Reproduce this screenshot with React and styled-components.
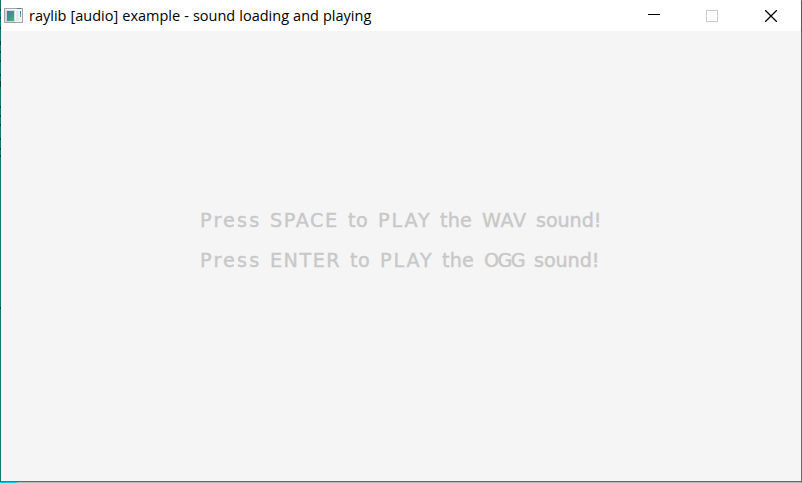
import React from "react";
import styled, { createGlobalStyle } from "styled-components";

const GlobalStyle = createGlobalStyle`
  html, body, #root { margin: 0; height: 100%; overflow: hidden; }
  *, *::before, *::after { box-sizing: border-box; }
`;

const Desktop = styled.div`
  width: 802px;
  height: 483px;
  display: grid;
  grid-template-columns: 1px 1fr 1px;
  grid-template-rows: 482px 1px;
  background: #b4b4b4;
`;

const specks = [9, 17, 27, 41, 43, 51, 60, 74, 81, 83, 85, 106, 115, 124, 138, 148, 155, 307];

const LeftEdge = styled.div`
  background: linear-gradient(
    ${specks.map((y) => `#157574 ${y}px, #173d38 ${y}px, #173d38 ${y + 2}px, #157574 ${y + 2}px`).join(", ")}
  );
`;

const RightEdge = styled.div`
  background: linear-gradient(#8b6f67 2px, #23706d 2px 31px, #686c6c 31px);
`;

const BottomEdge = styled.div`
  grid-column: 1 / -1;
  width: 17px;
  background: #00cfd3;
`;

const Window = styled.main`
  display: grid;
  grid-template-rows: 31px 1fr;
  border-bottom: 1px solid #696969;
  background: #f5f5f5;
`;

const TitleBar = styled.header`
  display: flex;
  align-items: center;
  padding-left: 3px;
  background: #fff;
`;

const Title = styled.h1`
  flex: 1;
  margin: 0 0 0 5px;
  font: 400 14.5px/20px "Open Sans", "Noto Sans", sans-serif;
  letter-spacing: 0;
  word-spacing: 0.3px;
  color: #000;
  white-space: pre;
`;

const Controls = styled.div`
  display: flex;
  height: 31px;
`;

const ControlButton = styled.button`
  width: ${({ $width = 58 }) => $width}px;
  height: 31px;
  padding: 0;
  border: 0;
  background: none;
  color: ${({ $muted }) => ($muted ? "#cccccc" : "#000")};
  display: grid;
  place-items: center;
`;

const Canvas = styled.section`
  padding: 180px 0 0 199px;
  font: 400 19.2px/20px "DejaVu Sans", sans-serif;
  color: #c8c8c8;
  -webkit-text-stroke: 0.4px #c8c8c8;
`;

const Message = styled.p`
  display: flex;
  gap: 10px;
  height: 20px;
  margin: 0 0 20px;
`;

const Word = styled.span`
  flex: none;
  width: ${({ $width }) => $width}px;
  letter-spacing: ${({ $spacing }) => $spacing}px;
  white-space: nowrap;
`;

const messages = [
  [["Press", 60, 2.2], ["SPACE", 68, 1.6], ["to", 20, 0.6], ["PLAY", 52, 1.9], ["the", 32, 0.2], ["WAV", 44, 0.6], ["sound!", 62, -0.1]],
  [["Press", 60, 2.2], ["ENTER", 70, 1.5], ["to", 20, 0.6], ["PLAY", 52, 1.9], ["the", 32, 0.2], ["OGG", 40, -1.6], ["sound!", 62, -0.1]],
];

function AppIcon() {
  return (
    <svg width="20" height="16" viewBox="0 0 20 16" shapeRendering="crispEdges" aria-hidden="true">
      <defs>
        <linearGradient id="screen" x1="0" y1="0" x2="1" y2="1">
          <stop stopColor="#4678a5" />
          <stop offset=".55" stopColor="#43968a" />
          <stop offset="1" stopColor="#59b573" />
        </linearGradient>
      </defs>
      <path fill="#a0a5aa" d="M0 0h19v15H0z" />
      <path fill="#f5f6f7" d="M1 1h17v13H1z" />
      <path fill="#d5d8db" d="M1 2h10v12H1z" />
      <path fill="url(#screen)" d="M3 3h7v10H3z" />
      <path fill="#e8eaeb" d="M12 3h3v10h-3z" />
      <path fill="#477fbc" d="M16 3h1v3h-1z" />
      <path fill="#63aa84" d="M16 6h1v3h-1z" />
      <path fill="#70777e" d="M13 0h4v1h-4z" />
    </svg>
  );
}

function MinimizeIcon() {
  return (
    <svg width="12" height="12" viewBox="0 0 12 12" shapeRendering="crispEdges">
      <path fill="currentColor" d="M0 4h12v1H0z" />
    </svg>
  );
}

function MaximizeIcon() {
  return (
    <svg width="12" height="12" viewBox="0 0 12 12" shapeRendering="crispEdges">
      <path fill="none" stroke="currentColor" d="M.5 .5h11v11H.5z" />
    </svg>
  );
}

function CloseIcon() {
  return (
    <svg width="12" height="12" viewBox="0 0 12 12">
      <path fill="none" stroke="currentColor" strokeWidth="1.25" d="M0 0l12 12M12 0L0 12" />
    </svg>
  );
}

export default function App() {
  return (
    <Desktop>
      <GlobalStyle />
      <LeftEdge />
      <Window>
        <TitleBar>
          <AppIcon />
          <Title>raylib [audio] example - sound loading and playing</Title>
          <Controls>
            <ControlButton aria-label="Minimize"><MinimizeIcon /></ControlButton>
            <ControlButton aria-label="Maximize" $muted disabled><MaximizeIcon /></ControlButton>
            <ControlButton aria-label="Close" $width={60}><CloseIcon /></ControlButton>
          </Controls>
        </TitleBar>
        <Canvas>
          {messages.map((words, line) => (
            <Message key={line}>
              {words.map(([text, width, spacing], i) => (
                <Word key={i} $width={width} $spacing={spacing}>{text}</Word>
              ))}
            </Message>
          ))}
        </Canvas>
      </Window>
      <RightEdge />
      <BottomEdge />
    </Desktop>
  );
}
